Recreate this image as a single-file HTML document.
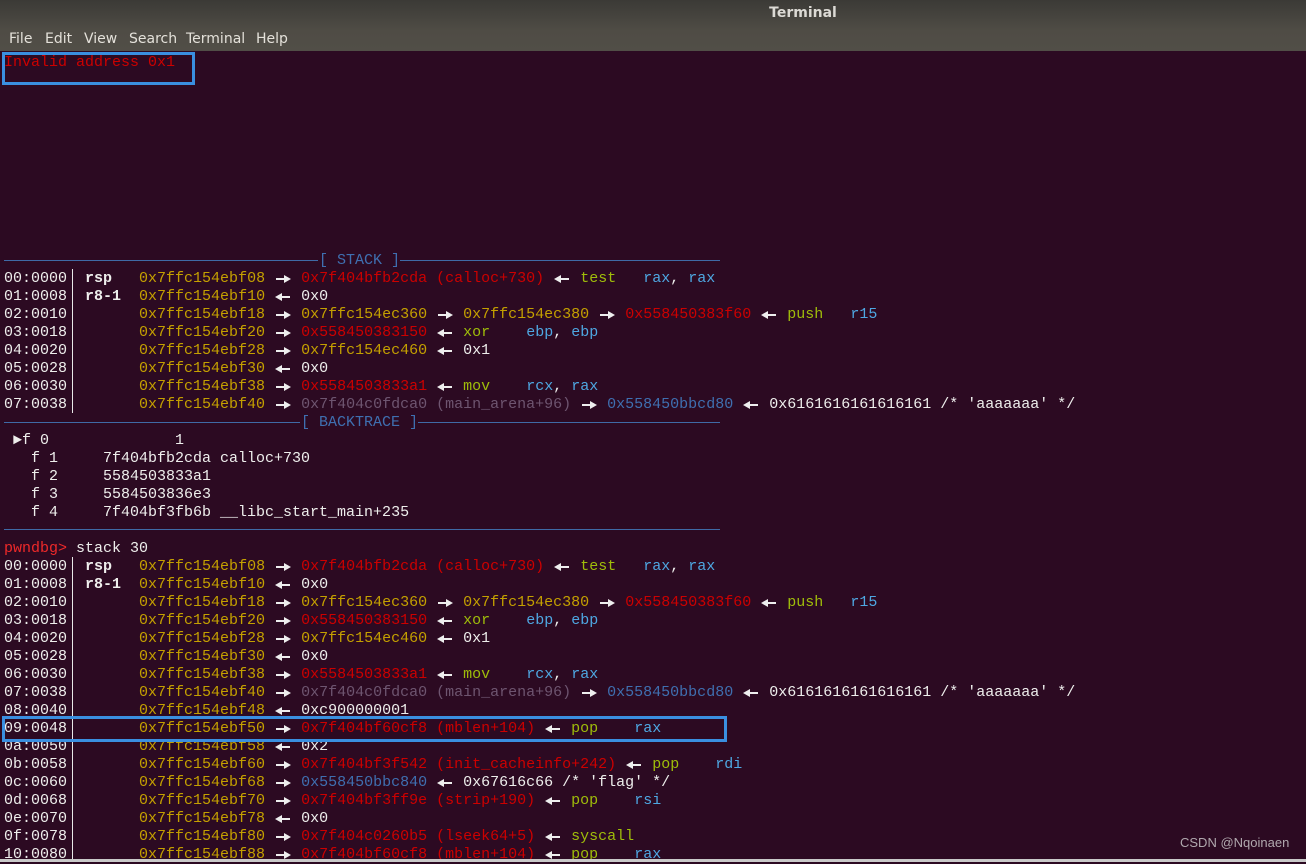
<!DOCTYPE html>
<html><head><meta charset="utf-8"><style>
*{margin:0;padding:0;box-sizing:border-box}
body{width:1306px;height:862px;overflow:hidden;background:#2c0a22;position:relative;font-family:"Liberation Mono","DejaVu Sans Mono",monospace}
#top{position:absolute;left:0;top:0;width:1306px;height:51px;background:linear-gradient(#3b3a36,#4f4c45 60%,#514e47)}
#title{position:absolute;left:0;width:1306px;top:5px;text-align:center;font:bold 14px "DejaVu Sans","Liberation Sans",sans-serif;color:#dcdad5;padding-left:300px}
.m{position:absolute;top:31px;font:14px "DejaVu Sans","Liberation Sans",sans-serif;color:#e4e1da}
.l{position:absolute;left:4px;height:18px;line-height:18px;font-size:15px;white-space:pre;color:#eeeeec;margin-top:1px}
.y{color:#c4a000}.r{color:#cc0000}.b{color:#3f6fb0}.p{color:#6e5570}.g{color:#9fbd0a}.c{color:#4ea7e2}.w{color:#eeeeec}.hb{color:#3f6fb0}
.bw{font-weight:bold;color:#eeeeec}.pr{color:#ef2929}
.ra,.la{display:inline-block;width:18px;height:18px;vertical-align:top;position:relative}
.ra::before{content:"";position:absolute;left:2px;top:8px;width:10px;height:2px;background:#eee}
.ra::after{content:"";position:absolute;left:10px;top:5px;border-left:7px solid #eee;border-top:4px solid transparent;border-bottom:4px solid transparent}
.la::before{content:"";position:absolute;left:6px;top:8px;width:10px;height:2px;background:#eee}
.la::after{content:"";position:absolute;left:1px;top:5px;border-right:7px solid #eee;border-top:4px solid transparent;border-bottom:4px solid transparent}
.hl{position:absolute;height:1px;background:#3f6aa6}
.vl{position:absolute;left:72px;width:1px;background:#e8e8e8}
.box{position:absolute;border:3px solid #3a8fe0}
</style></head><body>
<div id="top"></div>
<div id="title">Terminal</div>
<div class="m" style="left:9px">File</div>
<div class="m" style="left:45px">Edit</div>
<div class="m" style="left:84px">View</div>
<div class="m" style="left:129px">Search</div>
<div class="m" style="left:186px">Terminal</div>
<div class="m" style="left:256px">Help</div>

<div class="l r" style="top:53px">Invalid address 0x1</div>
<div class="box" style="left:2px;top:52px;width:193px;height:33px"></div>

<div class="hl" style="left:4px;top:260px;width:314px"></div>
<div class="l hb" style="top:251px;left:319px">[ STACK ]</div>
<div class="hl" style="left:400px;top:260px;width:320px"></div>

<div class="vl" style="top:269px;height:144px"></div>
<div class="l" style="top:269px">00:0000  <span class="bw">rsp</span>   <span class="y">0x7ffc154ebf08</span> <i class="ra"></i> <span class="r">0x7f404bfb2cda (calloc+730)</span> <i class="la"></i> <span class="g">test</span>   <span class="c">rax</span>, <span class="c">rax</span></div>
<div class="l" style="top:287px">01:0008  <span class="bw">r8-1</span>  <span class="y">0x7ffc154ebf10</span> <i class="la"></i> 0x0</div>
<div class="l" style="top:305px">02:0010        <span class="y">0x7ffc154ebf18</span> <i class="ra"></i> <span class="y">0x7ffc154ec360</span> <i class="ra"></i> <span class="y">0x7ffc154ec380</span> <i class="ra"></i> <span class="r">0x558450383f60</span> <i class="la"></i> <span class="g">push</span>   <span class="c">r15</span></div>
<div class="l" style="top:323px">03:0018        <span class="y">0x7ffc154ebf20</span> <i class="ra"></i> <span class="r">0x558450383150</span> <i class="la"></i> <span class="g">xor</span>    <span class="c">ebp</span>, <span class="c">ebp</span></div>
<div class="l" style="top:341px">04:0020        <span class="y">0x7ffc154ebf28</span> <i class="ra"></i> <span class="y">0x7ffc154ec460</span> <i class="la"></i> 0x1</div>
<div class="l" style="top:359px">05:0028        <span class="y">0x7ffc154ebf30</span> <i class="la"></i> 0x0</div>
<div class="l" style="top:377px">06:0030        <span class="y">0x7ffc154ebf38</span> <i class="ra"></i> <span class="r">0x5584503833a1</span> <i class="la"></i> <span class="g">mov</span>    <span class="c">rcx</span>, <span class="c">rax</span></div>
<div class="l" style="top:395px">07:0038        <span class="y">0x7ffc154ebf40</span> <i class="ra"></i> <span class="p">0x7f404c0fdca0 (main_arena+96)</span> <i class="ra"></i> <span class="b">0x558450bbcd80</span> <i class="la"></i> 0x6161616161616161 /* 'aaaaaaa' */</div>

<div class="hl" style="left:4px;top:422px;width:296px"></div>
<div class="l hb" style="top:413px;left:301px">[ BACKTRACE ]</div>
<div class="hl" style="left:418px;top:422px;width:302px"></div>
<div class="l" style="top:431px"> ►f 0              1</div>
<div class="l" style="top:449px">   f 1     7f404bfb2cda calloc+730</div>
<div class="l" style="top:467px">   f 2     5584503833a1</div>
<div class="l" style="top:485px">   f 3     5584503836e3</div>
<div class="l" style="top:503px">   f 4     7f404bf3fb6b __libc_start_main+235</div>
<div class="hl" style="left:4px;top:529px;width:716px"></div>

<div class="l" style="top:539px"><span class="pr">pwndbg&gt;</span> stack 30</div>
<div class="vl" style="top:557px;height:305px"></div>
<div class="l" style="top:557px">00:0000  <span class="bw">rsp</span>   <span class="y">0x7ffc154ebf08</span> <i class="ra"></i> <span class="r">0x7f404bfb2cda (calloc+730)</span> <i class="la"></i> <span class="g">test</span>   <span class="c">rax</span>, <span class="c">rax</span></div>
<div class="l" style="top:575px">01:0008  <span class="bw">r8-1</span>  <span class="y">0x7ffc154ebf10</span> <i class="la"></i> 0x0</div>
<div class="l" style="top:593px">02:0010        <span class="y">0x7ffc154ebf18</span> <i class="ra"></i> <span class="y">0x7ffc154ec360</span> <i class="ra"></i> <span class="y">0x7ffc154ec380</span> <i class="ra"></i> <span class="r">0x558450383f60</span> <i class="la"></i> <span class="g">push</span>   <span class="c">r15</span></div>
<div class="l" style="top:611px">03:0018        <span class="y">0x7ffc154ebf20</span> <i class="ra"></i> <span class="r">0x558450383150</span> <i class="la"></i> <span class="g">xor</span>    <span class="c">ebp</span>, <span class="c">ebp</span></div>
<div class="l" style="top:629px">04:0020        <span class="y">0x7ffc154ebf28</span> <i class="ra"></i> <span class="y">0x7ffc154ec460</span> <i class="la"></i> 0x1</div>
<div class="l" style="top:647px">05:0028        <span class="y">0x7ffc154ebf30</span> <i class="la"></i> 0x0</div>
<div class="l" style="top:665px">06:0030        <span class="y">0x7ffc154ebf38</span> <i class="ra"></i> <span class="r">0x5584503833a1</span> <i class="la"></i> <span class="g">mov</span>    <span class="c">rcx</span>, <span class="c">rax</span></div>
<div class="l" style="top:683px">07:0038        <span class="y">0x7ffc154ebf40</span> <i class="ra"></i> <span class="p">0x7f404c0fdca0 (main_arena+96)</span> <i class="ra"></i> <span class="b">0x558450bbcd80</span> <i class="la"></i> 0x6161616161616161 /* 'aaaaaaa' */</div>
<div class="l" style="top:701px">08:0040        <span class="y">0x7ffc154ebf48</span> <i class="la"></i> 0xc900000001</div>
<div class="l" style="top:719px">09:0048        <span class="y">0x7ffc154ebf50</span> <i class="ra"></i> <span class="r">0x7f404bf60cf8 (mblen+104)</span> <i class="la"></i> <span class="g">pop</span>    <span class="c">rax</span></div>
<div class="l" style="top:737px">0a:0050        <span class="y">0x7ffc154ebf58</span> <i class="la"></i> 0x2</div>
<div class="l" style="top:755px">0b:0058        <span class="y">0x7ffc154ebf60</span> <i class="ra"></i> <span class="r">0x7f404bf3f542 (init_cacheinfo+242)</span> <i class="la"></i> <span class="g">pop</span>    <span class="c">rdi</span></div>
<div class="l" style="top:773px">0c:0060        <span class="y">0x7ffc154ebf68</span> <i class="ra"></i> <span class="b">0x558450bbc840</span> <i class="la"></i> 0x67616c66 /* 'flag' */</div>
<div class="l" style="top:791px">0d:0068        <span class="y">0x7ffc154ebf70</span> <i class="ra"></i> <span class="r">0x7f404bf3ff9e (strip+190)</span> <i class="la"></i> <span class="g">pop</span>    <span class="c">rsi</span></div>
<div class="l" style="top:809px">0e:0070        <span class="y">0x7ffc154ebf78</span> <i class="la"></i> 0x0</div>
<div class="l" style="top:827px">0f:0078        <span class="y">0x7ffc154ebf80</span> <i class="ra"></i> <span class="r">0x7f404c0260b5 (lseek64+5)</span> <i class="la"></i> <span class="g">syscall</span></div>
<div class="l" style="top:845px">10:0080        <span class="y">0x7ffc154ebf88</span> <i class="ra"></i> <span class="r">0x7f404bf60cf8 (mblen+104)</span> <i class="la"></i> <span class="g">pop</span>    <span class="c">rax</span></div>

<div class="box" style="left:2px;top:716px;width:725px;height:26px"></div>
<div style="position:absolute;left:1180px;top:835px;font:13px 'Liberation Sans',sans-serif;color:#b0a8ae">CSDN @Nqoinaen</div>
<div style="position:absolute;left:0;top:859px;width:1306px;height:3px;background:#c9c9c9"></div>
</body></html>
